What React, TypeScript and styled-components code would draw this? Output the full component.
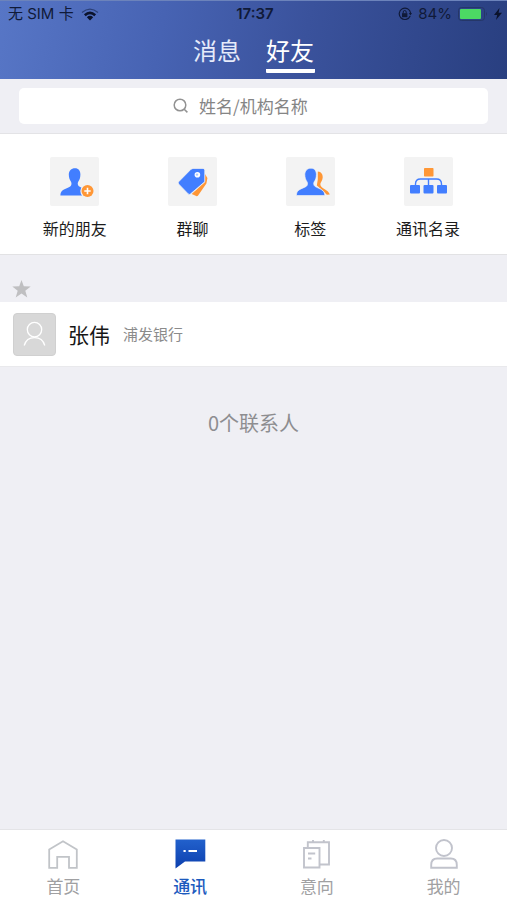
import React from "react";
import styled, { createGlobalStyle } from "styled-components";

const GlobalStyle = createGlobalStyle`
  * { box-sizing: border-box; }
  body {
    margin: 0;
    background: #efeff4;
    font-family: "Noto Sans CJK SC", sans-serif;
  }
  button, input { font: inherit; color: inherit; }
  button { padding: 0; border: 0; background: none; cursor: pointer; }
  svg { display: block; flex: none; }
`;

const Screen = styled.div`
  display: flex;
  flex-direction: column;
  min-height: 100vh;
`;

const Header = styled.header`
  border-top: 1px solid #6c83bb;
  background: linear-gradient(100deg, #5776c6 0%, #4763b3 32%, #3a529c 60%, #293f80 100%);
`;

const StatusBar = styled.div`
  display: grid;
  grid-template-columns: 1fr auto 1fr;
  align-items: center;
  height: 26px;
  padding: 0 5px 0 8px;
  color: #101a38;
  font-family: Inter, "Noto Sans CJK SC", sans-serif;
  font-size: 15px;
  line-height: 20px;
`;

const StatusGroup = styled.div<{ $end?: boolean }>`
  display: flex;
  align-items: center;
  justify-content: ${(p) => (p.$end ? "flex-end" : "flex-start")};
  gap: ${(p) => (p.$end ? 6 : 7)}px;
`;

const Time = styled.time`
  font-weight: 600;
`;

const HeaderTabs = styled.nav`
  display: flex;
  justify-content: center;
  gap: 24px;
  height: 52px;
`;

const HeaderTab = styled.button<{ $active?: boolean }>`
  display: flex;
  flex-direction: column;
  align-items: center;
  width: 49px;
  height: 46px;
  border-bottom: 4px solid ${(p) => (p.$active ? "#fff" : "transparent")};
  border-radius: 1px;
  color: ${(p) => (p.$active ? "#fff" : "#e6ebfa")};
  font-size: 24px;
  line-height: 46px;
`;

const SearchArea = styled.div`
  padding: 9px 19px;
  border-bottom: 1px solid #e3e3e6;
`;

const SearchBox = styled.label`
  display: flex;
  align-items: center;
  justify-content: center;
  gap: 10px;
  height: 36px;
  border-radius: 5px;
  background: #fff;
`;

const SearchInput = styled.input`
  width: 135px;
  padding: 0;
  border: 0;
  outline: 0;
  background: transparent;
  font-size: 17px;
  line-height: 26px;
  &::placeholder { color: #858585; opacity: 1; }
`;

const Actions = styled.nav`
  display: grid;
  grid-template-columns: repeat(4, 1fr);
  padding: 23px 20px 14px 16px;
  border-bottom: 1px solid #e2e2e4;
  background: #fff;
`;

const Action = styled.button`
  display: flex;
  flex-direction: column;
  align-items: center;
  gap: 10px;
  color: #1c1c1c;
  font-size: 16px;
  line-height: 24px;
`;

const Tile = styled.span`
  border-radius: 2px;
  background: #f3f3f3;
`;

const SectionHead = styled.div`
  display: flex;
  align-items: flex-end;
  height: 47px;
  padding: 0 12px 4px;
`;

const Contact = styled.button`
  display: flex;
  align-items: center;
  height: 65px;
  padding: 0 13px;
  border-bottom: 1px solid #e9e9ec;
  background: #fff;
  text-align: left;
`;

const Avatar = styled.span`
  display: flex;
  align-items: center;
  justify-content: center;
  width: 43px;
  height: 43px;
  margin-right: 12px;
  border: 1px solid #d0d0d0;
  border-radius: 4px;
  background: #d8d8d8;
`;

const Name = styled.span`
  margin-right: 13px;
  color: #161616;
  font-size: 21px;
  line-height: 30px;
`;

const Company = styled.span`
  color: #8b8b8b;
  font-size: 15px;
  line-height: 22px;
`;

const Main = styled.main`
  display: flex;
  flex: 1;
  flex-direction: column;
`;

const Count = styled.p`
  margin: 0;
  padding: 41px 0;
  color: #8d8d90;
  font-size: 20px;
  line-height: 30px;
  text-align: center;
`;

const BottomBar = styled.nav`
  display: grid;
  grid-template-columns: repeat(4, 1fr);
  height: 71px;
  border-top: 1px solid #e4e4e7;
  background: #fff;
`;

const BottomTab = styled.button<{ $active?: boolean }>`
  display: flex;
  flex-direction: column;
  align-items: center;
  padding-top: 8px;
  gap: 3px;
  color: ${(p) => (p.$active ? "#1c5abe" : "#a0a0a2")};
  font-size: 17px;
  font-weight: ${(p) => (p.$active ? 500 : 400)};
  line-height: 26px;
`;

const Wifi = () => (
  <svg width="18" height="13" viewBox="0 0 18 13" fill="none" aria-hidden="true">
    <path d="M1 4.6Q9-2.4 17 4.6" stroke="#2b4078" strokeWidth="1.3" />
    <path d="M3.8 7.2Q9 2.6 14.2 7.2" stroke="#0b132c" strokeWidth="2.6" />
    <path d="M5.8 9.2Q9 6.4 12.2 9.2L9 12.4Z" fill="#0b132c" />
  </svg>
);

const RotationLock = () => (
  <svg width="14" height="14" viewBox="0 0 14 14" fill="none" stroke="#101a38" aria-hidden="true">
    <path d="M12.2 9A5.7 5.7 0 1 1 12.6 6" strokeWidth="1.2" />
    <path d="M10.8 6h3.2L12.4 8.4Z" fill="#101a38" stroke="none" />
    <path d="M4 6.2h5.4v4H4Z" fill="#101a38" stroke="none" />
    <path d="M5.2 6.4V5a1.5 1.5 0 0 1 3 0v1.4" />
  </svg>
);

const Battery = () => (
  <svg width="30" height="14" viewBox="0 0 30 14" fill="none" aria-hidden="true">
    <rect x=".5" y=".5" width="26" height="13" rx="3" stroke="#253768" />
    <rect x="2" y="2" width="21" height="10" rx="1" fill="#4cd964" />
    <path d="M28 5Q30 7 28 9Z" fill="#253768" />
  </svg>
);

const Bolt = () => (
  <svg width="8" height="12" viewBox="0 0 8 12" aria-hidden="true">
    <path d="M5.5 0 0 7h3.2L2 12l6-7.2H4.6Z" fill="#0b132c" />
  </svg>
);

const SearchIcon = () => (
  <svg width="16" height="16" viewBox="0 0 16 16" fill="none" stroke="#929292" strokeWidth="1.5" aria-hidden="true">
    <circle cx="7" cy="7" r="5.8" />
    <path d="m11.2 11.2 3.2 3.2" />
  </svg>
);

const PERSON = "M25 11.2c-3.8 0-6.2 2.6-6.2 6.4 0 3.2 1 5.6 2.2 7.2.9 1.7.6 3.6-.8 4.6-2 1.4-6 2.2-8.1 4.3-1.1 1.1-1.7 2.6-1.7 4.9h28.4c0-2.1-.7-3.7-1.8-4.8-2.1-2.1-6.2-3-8.1-4.5-1.3-1.1-1.5-3.1-.7-4.5 1.3-1.6 2.2-4 2.2-7.2 0-3.8-1.8-6.4-5.4-6.4Z";

const NewFriendIcon = () => (
  <svg width="49" height="49" viewBox="0 0 49 49" aria-hidden="true">
    <path d={PERSON} fill="#427eff" />
    <circle cx="37.5" cy="34" r="7.2" fill="#f3f3f3" />
    <circle cx="37.5" cy="34" r="6" fill="#ff9736" />
    <path d="M37.5 30.8v6.4M34.3 34h6.4" stroke="#fff" strokeWidth="1.6" />
  </svg>
);

const TagsIcon = () => (
  <svg width="49" height="49" viewBox="0 0 49 49" aria-hidden="true">
    <path d="m37 17 2.4 4-1 5.5-8.5 12.2q-.7.8-1.7.3L23.7 37 37 25Z" fill="#ff9736" />
    <path d="m23 12.2 2-.8h10q1.8 0 1.8 1.8v11.5L22.4 37q-1.1 1-2.2-.1l-9.6-9.9q-1-1.2.1-2.3Z" fill="#427eff" stroke="#f3f3f3" strokeWidth=".8" />
    <circle cx="29.4" cy="17.7" r="2.8" fill="#fff" />
    <circle cx="29" cy="17.6" r="1.2" fill="#afc9ff" />
  </svg>
);

const LabelIcon = () => (
  <svg width="49" height="49" viewBox="0 0 49 49" aria-hidden="true">
    <path d="M31.8 14.4c3.5.3 5.1 2.7 4.9 6-.1 3-2.2 4.7-2.4 6.5-.2 2.1 2 3.8 4.8 5.5 2 1.2 4 2.6 4.7 5.2l-3 .2-4-4.2-6-5 1-6Z" fill="#ff9736" />
    <path d={PERSON} fill="#427eff" stroke="#f3f3f3" strokeWidth=".7" />
  </svg>
);

const DirectoryIcon = () => (
  <svg width="49" height="49" viewBox="0 0 49 49" aria-hidden="true">
    <path d="M24.5 28v-6M11.5 28v-1q0-5 5-5h16q5 0 5 5v1" fill="none" stroke="#427eff" strokeWidth="1.4" />
    <rect x="20" y="11" width="9.5" height="8.5" rx=".7" fill="#ff9736" />
    <rect x="6" y="28" width="10" height="8.5" rx="1" fill="#427eff" />
    <rect x="19.5" y="28" width="10" height="8.5" rx="1" fill="#427eff" />
    <rect x="33" y="28" width="10" height="8.5" rx="1" fill="#427eff" />
  </svg>
);

const Star = () => (
  <svg width="19" height="18" viewBox="0 0 19 18" aria-label="星标" role="img">
    <path d="m9.5 0 2.3 6.3 6.9.2-5.4 4.2 2 6.8-5.8-3.9-5.8 3.9 2-6.8L.3 6.5l6.9-.2Z" fill="#bfbfc1" />
  </svg>
);

const AvatarIcon = () => (
  <svg width="23" height="27" viewBox="0 0 23 27" fill="none" stroke="#fff" strokeWidth="1.3" aria-hidden="true">
    <circle cx="11.5" cy="8.6" r="7.2" />
    <path d="M1.2 24.5C2.6 19.4 6 16.6 11.5 16.6s8.9 2.8 10.3 7.9" />
  </svg>
);

const HomeIcon = () => (
  <svg width="32" height="32" viewBox="0 0 32 32" fill="none" stroke="#c1c4c8" strokeWidth="1.8" aria-hidden="true">
    <path d="M2.2 11.5 16 3.2l13.8 8.3v18.3H22v-11H10.2v11h-8Z" />
  </svg>
);

const ChatIcon = () => (
  <svg width="32" height="32" viewBox="0 0 32 32" aria-hidden="true">
    <defs>
      <linearGradient id="chat" x1="0" y1="0" x2="0" y2="1">
        <stop offset="0" stopColor="#2261cc" />
        <stop offset="1" stopColor="#0c3fae" />
      </linearGradient>
    </defs>
    <path d="M1.5 1.5h29.8v22H11L1.5 30.5Z" fill="url(#chat)" />
    <path d="M9.5 13h2.2M14.5 13h8.5" stroke="#fff" strokeWidth="2" />
  </svg>
);

const IntentIcon = () => (
  <svg width="32" height="32" viewBox="0 0 32 32" fill="none" stroke="#c2c4cc" strokeWidth="1.9" aria-hidden="true">
    <path d="M6.8 9.5V4.2H28v22.3h-9.5M12 2v3M22.8 2v3" />
    <path d="M3 10h15.5v19.5H3ZM7 15.5h7.2M7 20.5h3.5" />
  </svg>
);

const ProfileIcon = () => (
  <svg width="32" height="32" viewBox="0 0 32 32" fill="none" stroke="#c1c3cc" strokeWidth="1.9" aria-hidden="true">
    <circle cx="16" cy="10" r="8" />
    <path d="M3.2 29.8V27q0-6.5 6-6.5h13.6q6 0 6 6.5v2.8Z" />
  </svg>
);

const actions = [
  { label: "新的朋友", icon: <NewFriendIcon /> },
  { label: "群聊", icon: <TagsIcon /> },
  { label: "标签", icon: <LabelIcon /> },
  { label: "通讯名录", icon: <DirectoryIcon /> },
];

const tabs = [
  { label: "首页", icon: <HomeIcon /> },
  { label: "通讯", icon: <ChatIcon />, active: true },
  { label: "意向", icon: <IntentIcon /> },
  { label: "我的", icon: <ProfileIcon /> },
];

export default function App() {
  return (
    <>
      <GlobalStyle />
      <Screen>
        <Header>
          <StatusBar>
            <StatusGroup>
              <span>无 SIM 卡</span>
              <Wifi />
            </StatusGroup>
            <Time>17:37</Time>
            <StatusGroup $end>
              <RotationLock />
              <span>84%</span>
              <Battery />
              <Bolt />
            </StatusGroup>
          </StatusBar>
          <HeaderTabs>
            <HeaderTab>消息</HeaderTab>
            <HeaderTab $active>好友</HeaderTab>
          </HeaderTabs>
        </Header>
        <Main>
          <SearchArea>
            <SearchBox>
              <SearchIcon />
              <SearchInput type="text" placeholder="姓名/机构名称" aria-label="姓名/机构名称" />
            </SearchBox>
          </SearchArea>
          <Actions>
            {actions.map((a) => (
              <Action key={a.label}>
                <Tile>{a.icon}</Tile>
                {a.label}
              </Action>
            ))}
          </Actions>
          <SectionHead>
            <Star />
          </SectionHead>
          <Contact>
            <Avatar>
              <AvatarIcon />
            </Avatar>
            <Name>张伟</Name>
            <Company>浦发银行</Company>
          </Contact>
          <Count>0个联系人</Count>
        </Main>
        <BottomBar>
          {tabs.map((t) => (
            <BottomTab key={t.label} $active={t.active}>
              {t.icon}
              {t.label}
            </BottomTab>
          ))}
        </BottomBar>
      </Screen>
    </>
  );
}
